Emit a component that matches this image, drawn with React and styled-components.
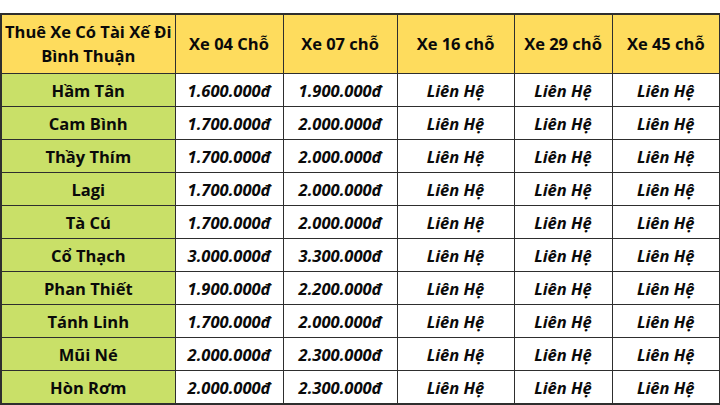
import styled, { createGlobalStyle } from 'styled-components';

const GlobalStyle = createGlobalStyle`
  html, body {
    margin: 0;
    padding: 0;
    background: #fff;
  }
  body {
    font-family: "Open Sans", "Noto Sans", sans-serif;
  }
`;

const Page = styled.div`
  padding-top: 13px;
  width: 720px;
`;

const Table = styled.table`
  width: 719px;
  border-collapse: collapse;
  table-layout: fixed;
  border: 2px solid #2e2e2e;
`;

const HeadCell = styled.th`
  background: #fedc5d;
  color: #0a0a0a;
  font-size: 16.5px;
  font-weight: 700;
  line-height: 24px;
  height: 58px;
  padding: 0 1px;
  text-align: center;
  border: 1px solid #2e2e2e;
`;

const Cell = styled.td`
  height: 32px;
  padding: 0;
  text-align: center;
  font-size: 16.5px;
  font-weight: 700;
  color: #0a0a0a;
  border: 1px solid #2e2e2e;
  background: ${(props) => (props.place ? '#c9e068' : '#fff')};
  font-style: ${(props) => (props.place ? 'normal' : 'italic')};
`;

const widths = [174, 108, 114, 117, 98, 108];
const columns = ['Xe 04 Chỗ', 'Xe 07 chỗ', 'Xe 16 chỗ', 'Xe 29 chỗ', 'Xe 45 chỗ'];

const rows = [
  ['Hầm Tân', '1.600.000đ', '1.900.000đ'],
  ['Cam Bình', '1.700.000đ', '2.000.000đ'],
  ['Thầy Thím', '1.700.000đ', '2.000.000đ'],
  ['Lagi', '1.700.000đ', '2.000.000đ'],
  ['Tà Cú', '1.700.000đ', '2.000.000đ'],
  ['Cổ Thạch', '3.000.000đ', '3.300.000đ'],
  ['Phan Thiết', '1.900.000đ', '2.200.000đ'],
  ['Tánh Linh', '1.700.000đ', '2.000.000đ'],
  ['Mũi Né', '2.000.000đ', '2.300.000đ'],
  ['Hòn Rơm', '2.000.000đ', '2.300.000đ'],
];

export default function App() {
  return (
    <Page>
      <GlobalStyle />
      <Table>
        <colgroup>
          {widths.map((w, i) => (
            <col key={i} style={{ width: w }} />
          ))}
        </colgroup>
        <thead>
          <tr>
            <HeadCell>Thuê Xe Có Tài Xế Đi Bình Thuận</HeadCell>
            {columns.map((c) => (
              <HeadCell key={c}>{c}</HeadCell>
            ))}
          </tr>
        </thead>
        <tbody>
          {rows.map(([place, p4, p7]) => (
            <tr key={place}>
              <Cell place>{place}</Cell>
              <Cell>{p4}</Cell>
              <Cell>{p7}</Cell>
              <Cell>Liên Hệ</Cell>
              <Cell>Liên Hệ</Cell>
              <Cell>Liên Hệ</Cell>
            </tr>
          ))}
        </tbody>
      </Table>
    </Page>
  );
}
